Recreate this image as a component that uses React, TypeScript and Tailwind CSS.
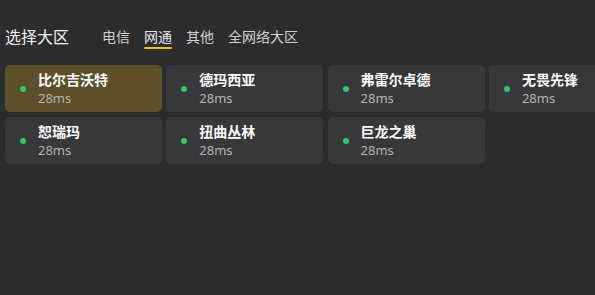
import React, { useState } from "react";

const tabs = ["电信", "网通", "其他", "全网络大区"];

const servers = [
  { name: "比尔吉沃特", ping: "28ms" },
  { name: "德玛西亚", ping: "28ms" },
  { name: "弗雷尔卓德", ping: "28ms" },
  { name: "无畏先锋", ping: "28ms" },
  { name: "恕瑞玛", ping: "28ms" },
  { name: "扭曲丛林", ping: "28ms" },
  { name: "巨龙之巢", ping: "28ms" },
];

export default function App() {
  const [tab, setTab] = useState(1);
  const [selected, setSelected] = useState(0);

  return (
    <div
      className="w-screen h-screen overflow-hidden bg-[#2c2c2e] text-white pl-[5px] pt-[28px]"
      style={{ fontFamily: '"Noto Sans", "Noto Sans CJK SC", sans-serif' }}
    >
      <div className="flex items-start h-[37px]">
        <h2 className="text-[16px] leading-[18px] text-[#f2f2f2] w-[97px]">选择大区</h2>
        <div className="flex gap-[14px]">
          {tabs.map((t, i) => (
            <button
              key={t}
              onClick={() => setTab(i)}
              className={`relative text-[14px] leading-[18px] pb-[3px] ${
                i === tab ? "text-[#e8e8e8]" : "text-[#d0d0d0]"
              }`}
            >
              {t}
              {i === tab && (
                <span className="absolute left-0 right-0 bottom-0 h-[2px] rounded-full bg-[#f2c200]" />
              )}
            </button>
          ))}
        </div>
      </div>

      <div className="grid grid-cols-[repeat(4,157px)] gap-x-[4.3px] gap-y-[5px]">
        {servers.map((s, i) => (
          <div
            key={s.name}
            onClick={() => setSelected(i)}
            className={`h-[47px] rounded-[5px] flex items-center pl-[15px] gap-[12px] cursor-pointer ${
              i === selected ? "bg-[#5c4f29]" : "bg-[#38383a]"
            }`}
          >
            <span className="w-[6px] h-[6px] rounded-full bg-[#2fc86a] mt-[1px]" />
            <div className="flex flex-col">
              <span className="text-[14px] leading-[19px] font-bold text-white">{s.name}</span>
              <span className="text-[13px] leading-[18px] text-[#b4b4b4]">{s.ping}</span>
            </div>
          </div>
        ))}
      </div>
    </div>
  );
}
